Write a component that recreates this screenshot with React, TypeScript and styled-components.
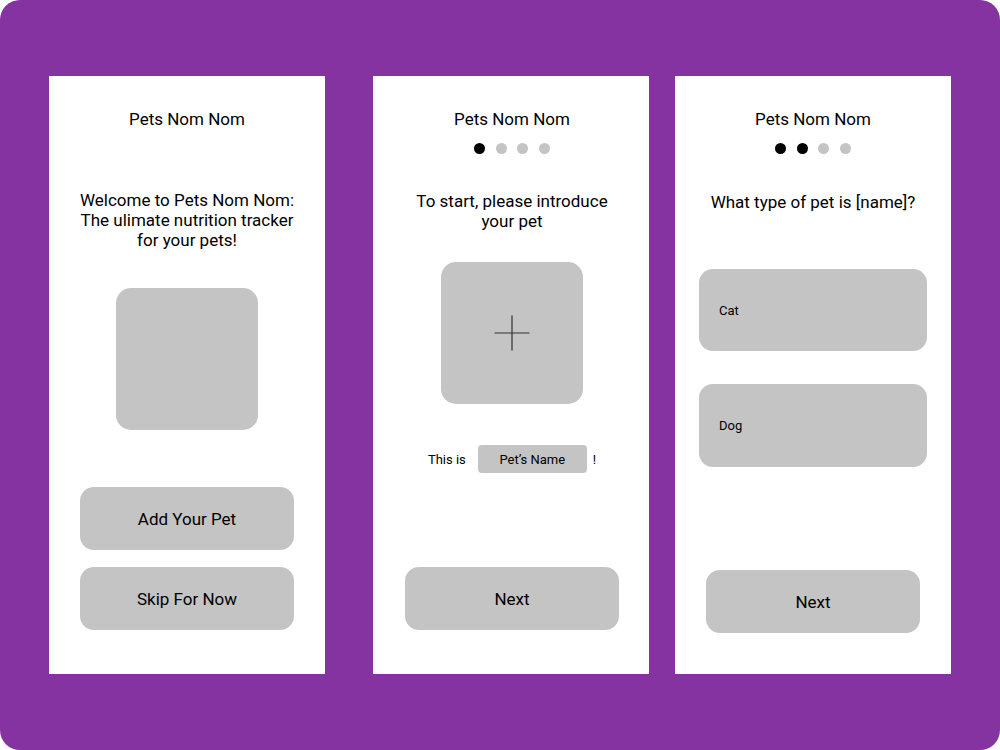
import React from 'react';
import styled, { createGlobalStyle } from 'styled-components';

const GlobalStyle = createGlobalStyle`
  html, body {
    margin: 0;
    padding: 0;
    background: #fff;
  }

  body {
    font-family: Roboto, "Liberation Sans", sans-serif;
    color: #000;
  }
`;

const Board = styled.div`
  width: 1000px;
  height: 750px;
  box-sizing: border-box;
  padding: 76px 49px;
  background: #8433a0;
  border-radius: 20px;
  display: flex;
  align-items: flex-start;
`;

const Screen = styled.section<{ $offset?: number; $nudge?: number }>`
  width: 276px;
  height: 598px;
  margin-left: ${(p) => p.$offset || 0}px;
  box-sizing: border-box;
  padding-top: 33px;
  padding-left: ${(p) => p.$nudge || 0}px;
  background: #fff;
  display: flex;
  flex-direction: column;
  align-items: center;
`;

const AppTitle = styled.h1`
  margin: 0;
  font-size: 17px;
  line-height: 20px;
  font-weight: 400;
  text-align: center;
`;

const Steps = styled.div`
  display: flex;
  gap: 10.5px;
  margin-top: 14px;
`;

const Dot = styled.span<{ $done?: boolean }>`
  width: 11px;
  height: 11px;
  border-radius: 50%;
  background: ${(p) => (p.$done ? '#000' : '#c4c4c4')};
`;

const Prompt = styled.p<{ $gap: number }>`
  margin: ${(p) => p.$gap}px 0 0;
  font-size: 17px;
  line-height: 20px;
  text-align: center;
`;

const Photo = styled.div<{ $gap: number }>`
  width: 142px;
  height: 142px;
  margin-top: ${(p) => p.$gap}px;
  border-radius: 15px;
  background: #c4c4c4;
  display: flex;
  align-items: center;
  justify-content: center;
`;

const Button = styled.button<{ $gap: number }>`
  width: 214px;
  height: 63px;
  margin-top: ${(p) => p.$gap}px;
  border: none;
  border-radius: 14px;
  background: #c4c4c4;
  font-family: inherit;
  font-size: 17px;
  color: #000;
`;

const NameRow = styled.div`
  display: flex;
  align-items: center;
  margin-top: 41px;
  font-size: 13px;
`;

const NameField = styled.div`
  width: 109px;
  height: 28px;
  margin: 0 6px 0 12px;
  border-radius: 4px;
  background: #c4c4c4;
  display: flex;
  align-items: center;
  justify-content: center;
`;

const Choice = styled.div<{ $gap: number; $tall?: boolean }>`
  width: 228px;
  height: ${(p) => (p.$tall ? 83 : 82)}px;
  margin-top: ${(p) => p.$gap}px;
  box-sizing: border-box;
  padding-left: 20px;
  border-radius: 14px;
  background: #c4c4c4;
  display: flex;
  align-items: center;
  font-size: 13px;
`;

const PlusIcon = () => (
  <svg width="36" height="36" viewBox="0 0 36 36">
    <path d="M18 0.5V35.5M0.5 18H35.5" stroke="#333" strokeWidth="1.2" fill="none" />
  </svg>
);

const Progress = ({ step }: { step: number }) => (
  <Steps>
    {[0, 1, 2, 3].map((i) => (
      <Dot key={i} $done={i < step} />
    ))}
  </Steps>
);

const App = () => (
  <>
    <GlobalStyle />
    <Board>
      <Screen>
        <AppTitle>Pets Nom Nom</AppTitle>
        <Prompt $gap={61}>
          Welcome to Pets Nom Nom:
          <br />
          The ulimate nutrition tracker
          <br />
          for your pets!
        </Prompt>
        <Photo $gap={38} />
        <Button $gap={57}>Add Your Pet</Button>
        <Button $gap={17}>Skip For Now</Button>
      </Screen>

      <Screen $offset={48} $nudge={2}>
        <AppTitle>Pets Nom Nom</AppTitle>
        <Progress step={1} />
        <Prompt $gap={37}>
          To start, please introduce
          <br />
          your pet
        </Prompt>
        <Photo $gap={31}>
          <PlusIcon />
        </Photo>
        <NameRow>
          <span>This is</span>
          <NameField>Pet’s Name</NameField>
          <span>!</span>
        </NameRow>
        <Button $gap={94}>Next</Button>
      </Screen>

      <Screen $offset={26}>
        <AppTitle>Pets Nom Nom</AppTitle>
        <Progress step={2} />
        <Prompt $gap={38}>What type of pet is [name]?</Prompt>
        <Choice $gap={57}>Cat</Choice>
        <Choice $gap={33} $tall>
          Dog
        </Choice>
        <Button $gap={103}>Next</Button>
      </Screen>
    </Board>
  </>
);

export default App;
